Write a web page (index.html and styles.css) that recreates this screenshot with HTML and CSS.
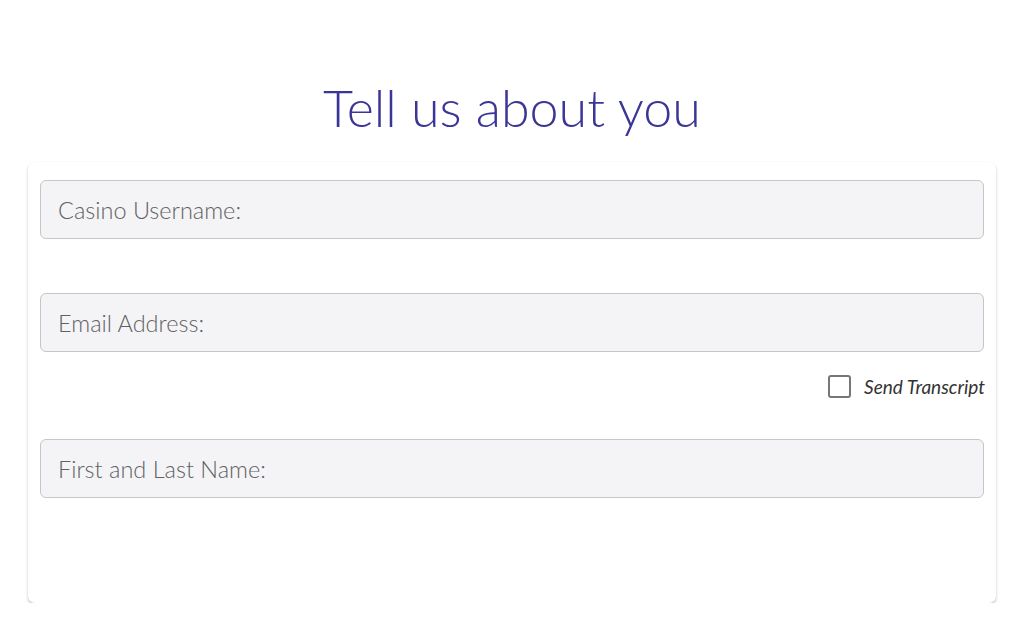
FILE: index.html
```html
<!DOCTYPE html>
<html>
<head>
<meta charset="utf-8">
<link rel="stylesheet" href="styles.css">
</head>
<body>
<div class="page">
  <h1 class="title">Tell us about you</h1>
  <form class="card">
    <input class="field" type="text" placeholder="Casino Username:">
    <input class="field field-email" type="text" placeholder="Email Address:">
    <label class="transcript">
      <span class="box"></span>
      <span class="transcript-text">Send Transcript</span>
    </label>
    <input class="field field-name" type="text" placeholder="First and Last Name:">
  </form>
</div>
</body>
</html>
```
FILE: styles.css
```css
html, body {
  margin: 0;
  padding: 0;
  background: #ffffff;
}
body {
  font-family: Lato, "Open Sans", sans-serif;
}
.page {
  display: flex;
  flex-direction: column;
  align-items: center;
  padding-top: 74px;
}
.title {
  margin: 0;
  font-family: Lato, sans-serif;
  font-weight: 300;
  font-size: 52px;
  line-height: 66px;
  color: #3a3597;
}
.card {
  box-sizing: border-box;
  width: 968px;
  height: 441px;
  margin-top: 22px;
  background: #fff;
  border-radius: 7px;
  box-shadow: 0 2px 3px rgba(0,0,0,0.22), 0 0 2px rgba(0,0,0,0.04);
  padding: 18px 12px 0 12px;
  display: flex;
  flex-direction: column;
}
.field {
  box-sizing: border-box;
  width: 944px;
  height: 59px;
  margin: 0;
  border: 1px solid #c6c6c8;
  border-radius: 6px;
  background: #f4f4f6;
  padding: 0 17px;
  font-family: Lato, sans-serif;
  font-weight: 300;
  font-size: 23.5px;
  color: #555;
  outline: none;
}
.field::placeholder {
  color: #616164;
  opacity: 1;
}
.field-email {
  margin-top: 54px;
}
.transcript {
  display: flex;
  align-items: center;
  justify-content: flex-end;
  gap: 13px;
  margin-top: 23px;
  height: 23px;
}
.box {
  box-sizing: border-box;
  width: 23px;
  height: 23px;
  border: 2px solid #777779;
  border-radius: 3px;
  background: #fff;
}
.transcript-text {
  font-family: Lato, sans-serif;
  font-style: italic;
  font-size: 19px;
  color: #333;
  margin-right: -1px;
}
.field-name {
  margin-top: 41px;
}
```
